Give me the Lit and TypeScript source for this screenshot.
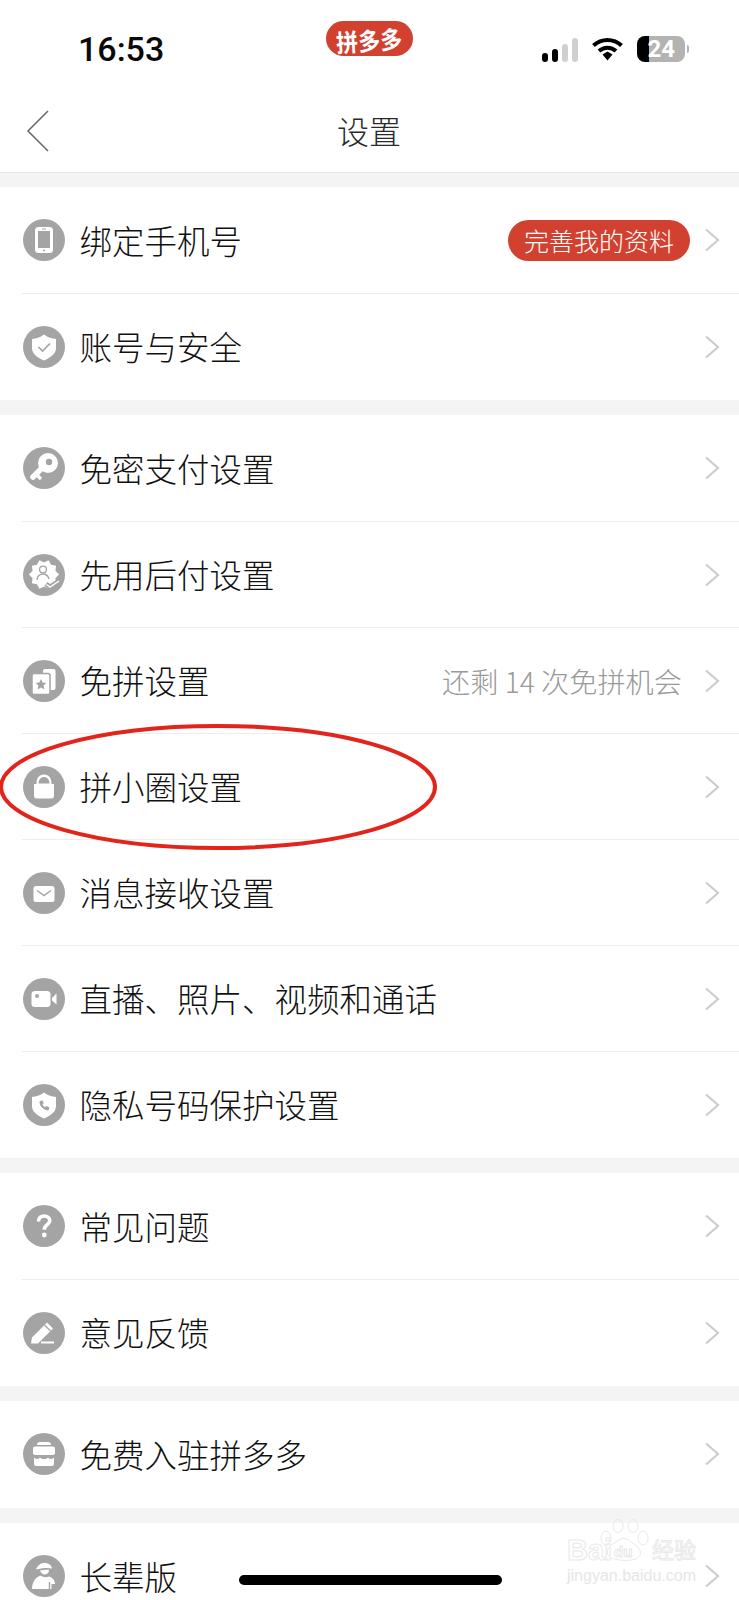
import { LitElement, html, css, svg } from "lit";
import { customElement } from "lit/decorators.js";

const GRAY = "#a4a4a4";

// ten pointed seal behind the "pay later" icon
function seal() {
  const pts: string[] = [];
  for (let i = 0; i < 20; i++) {
    const a = (i / 20) * Math.PI * 2;
    const r = i % 2 ? 12 : 15;
    pts.push(`${(21 + r * Math.cos(a)).toFixed(1)},${(20.5 + r * Math.sin(a)).toFixed(1)}`);
  }
  return pts.join(" ");
}

const SHIELD = "M21 8.5C25 11.5 29 12.5 33 13V22C33 28 27 32 21 34.5C15 32 9 28 9 22V13C13 12.5 17 11.5 21 8.5Z";

const ICONS: Record<string, unknown> = {
  phone: svg`<rect x="12" y="8" width="18" height="26" rx="3.5" fill="#fff"/><rect x="15" y="12" width="12" height="17" fill="${GRAY}"/><rect x="19" y="9.5" width="4" height="1" fill="${GRAY}"/><circle cx="21" cy="31.5" r="1" fill="${GRAY}"/>`,
  shield: svg`<path d="${SHIELD}" fill="#fff"/><polyline points="15.5,21 19.5,25 27,17.5" fill="none" stroke="${GRAY}" stroke-width="1.6"/>`,
  key: svg`<circle cx="25" cy="16" r="10" fill="#fff"/><circle cx="26" cy="15" r="3.2" fill="${GRAY}"/><path d="M20 20L10 30" stroke="#fff" stroke-width="5.5" stroke-linecap="round"/><path d="M13.5 27.5L18 32" stroke="#fff" stroke-width="3.2"/>`,
  seal: svg`<polygon points="${seal()}" fill="#fff"/><circle cx="20" cy="15.5" r="3.4" fill="none" stroke="${GRAY}" stroke-width="1.3"/><path d="M14 26C14.5 21.5 17 20 20 20C23 20 25 21.5 26 25" fill="none" stroke="${GRAY}" stroke-width="1.3"/><polyline points="23,30 27,33 36,27" fill="none" stroke="${GRAY}" stroke-width="5"/><polyline points="23.5,30.5 27,33 36,27" fill="none" stroke="#fff" stroke-width="1.5"/>`,
  cards: svg`<rect x="20" y="9" width="12.5" height="21" rx="2" fill="#fff"/><rect x="9" y="13.5" width="18" height="21" rx="2" fill="#fff" stroke="${GRAY}" stroke-width="1.5"/><polygon points="18,19 19.6,22.6 23.4,23 20.6,25.6 21.4,29.4 18,27.4 14.6,29.4 15.4,25.6 12.6,23 16.4,22.6" fill="${GRAY}"/>`,
  lock: svg`<path d="M13.5 18C13.5 12 16 8.5 21 8.5C26 8.5 28.5 12 28.5 18H31V30C31 31.5 30 32.5 28.5 32.5H13.5C12 32.5 11 31.5 11 30V18Z" fill="#fff"/><path d="M15.5 17.5C15.5 14 17.5 11 21 11C24.5 11 26.5 14 26.5 17.5Z" fill="${GRAY}"/>`,
  mail: svg`<rect x="10.5" y="14" width="21" height="16" rx="2.5" fill="#fff"/><polyline points="14,18.5 21,23.5 28,18.5" fill="none" stroke="${GRAY}" stroke-width="1.5"/>`,
  video: svg`<rect x="8.5" y="13" width="19" height="16" rx="3.5" fill="#fff"/><path d="M29 20L33.5 15.5V26.5L29 22.5Z" fill="#fff"/><circle cx="14" cy="18" r="2" fill="${GRAY}"/>`,
  guard: svg`<path d="${SHIELD}" fill="#fff"/><path d="M16.5 17.5C16.5 22 20 26 25.5 26.5L26.5 23.5L23.5 22L22 23C20.8 22.5 20 21.5 19.6 20.4L20.8 19L19.3 16.2Z" fill="${GRAY}"/>`,
  help: svg`<path d="M15.5 16.5C15.5 13 18 11 21.2 11C24.4 11 26.8 13 26.8 15.8C26.8 19.8 21.3 19.6 21.3 24.8" fill="none" stroke="#fff" stroke-width="3.6"/><circle cx="21.3" cy="30" r="2.4" fill="#fff"/>`,
  pen: svg`<polygon points="8,31.5 9,25.5 24,10.5 30,16.5 15,31.5" fill="#fff"/><path d="M21.5 13L27.5 19" stroke="${GRAY}" stroke-width="1.2"/><path d="M18 30.5H31" stroke="#fff" stroke-width="2"/>`,
  store: svg`<path d="M14 12C14 10 15 9 17 9H25C27 9 28 10 28 12Z" fill="#fff"/><rect x="10" y="13.5" width="22" height="8.5" rx="2" fill="#fff"/><path d="M11 24.5C13 26.5 15 26.5 17 24.5C19 26.5 23 26.5 25 24.5C27 26.5 29 26.5 31 24.5V31C31 32 30 33 29 33H13C12 33 11 32 11 31Z" fill="#fff"/>`,
  elder: svg`<path d="M13 14.5C15 9 19 7.5 23 8C26.5 8.5 28.5 10.5 29 13.5C24 12.5 18 13 13 14.5Z" fill="#fff"/><path d="M17 15.5C19 15 23 14.5 26 14.8C26 17.5 24.5 19.5 22 19.5C19.5 19.5 18 18 17 15.5Z" fill="#fff"/><path d="M9 34C9 28 12 22.5 17.5 20.5C20 22.5 24 22.5 26 21.5C29.5 22.5 32 25 32 29L28.5 29V34Z" fill="#fff"/><path d="M26.5 27V34" stroke="${GRAY}" stroke-width="1.4"/>`,
};

interface Row {
  icon: string;
  label: string;
  hint?: string;
  pill?: string;
}

const SECTIONS: Row[][] = [
  [
    { icon: "phone", label: "绑定手机号", pill: "完善我的资料" },
    { icon: "shield", label: "账号与安全" },
  ],
  [
    { icon: "key", label: "免密支付设置" },
    { icon: "seal", label: "先用后付设置" },
    { icon: "cards", label: "免拼设置", hint: "还剩 14 次免拼机会" },
    { icon: "lock", label: "拼小圈设置" },
    { icon: "mail", label: "消息接收设置" },
    { icon: "video", label: "直播、照片、视频和通话" },
    { icon: "guard", label: "隐私号码保护设置" },
  ],
  [
    { icon: "help", label: "常见问题" },
    { icon: "pen", label: "意见反馈" },
  ],
  [{ icon: "store", label: "免费入驻拼多多" }],
  [{ icon: "elder", label: "长辈版" }],
];

@customElement("app-root")
export class AppRoot extends LitElement {
  static styles = css`
    :host {
      display: block;
      position: relative;
      width: 739px;
      height: 1600px;
      overflow: hidden;
      background: #f4f4f4;
      font-family: "Noto Sans CJK SC", "Liberation Sans", sans-serif;
      color: #111;
    }

    .top {
      background: #fff;
      border-bottom: 1px solid #e4e4e4;
    }

    .status {
      height: 88px;
      display: grid;
      grid-template-columns: 1fr auto 1fr;
      align-items: start;
    }

    .time {
      margin: 30px 0 0 78px;
      font: 500 34px/38px Roboto, "Liberation Sans", sans-serif;
      color: #0a0a0a;
    }

    .app-tag {
      margin-top: 21px;
      width: 87px;
      height: 35px;
      border-radius: 18px;
      background: #d2412f;
      color: #fff;
      display: flex;
      align-items: center;
      justify-content: center;
      font-size: 22px;
      font-weight: 700;
      line-height: 1;
    }

    .app-tag span {
      transform: rotate(-4deg) scale(1, 1.12);
    }

    .sys {
      display: flex;
      justify-content: flex-end;
      align-items: center;
      margin-top: 36px;
      padding-right: 54px;
      gap: 14px;
    }

    .signal {
      display: flex;
      align-items: flex-end;
      gap: 3.5px;
      height: 25px;
    }

    .signal i {
      display: block;
      width: 6.5px;
      border-radius: 3px;
      background: #000;
    }

    .signal i.off {
      background: #cfcfcf;
    }

    .battery {
      position: relative;
      width: 48px;
      height: 26px;
      border-radius: 8px;
      background: linear-gradient(90deg, #000 0 12px, #b3b3b3 12px);
      color: #fff;
      font: 700 24px/26px Roboto, "Liberation Sans", sans-serif;
      text-align: right;
      padding-right: 10px;
      box-sizing: border-box;
    }

    .battery::after {
      content: "";
      position: absolute;
      left: 50px;
      top: 9px;
      width: 2px;
      height: 8px;
      border-radius: 0 2px 2px 0;
      background: #b3b3b3;
    }

    .nav {
      height: 84px;
      position: relative;
      display: flex;
      align-items: center;
      justify-content: center;
      font-size: 32px;
      font-weight: 300;
      color: #2a2a2a;
      padding-right: 1px;
    }

    .back {
      position: absolute;
      left: 26px;
      top: 22px;
    }

    .list {
      display: flex;
      flex-direction: column;
      gap: 15px;
      padding-top: 14px;
    }

    .section {
      background: #fff;
      padding-bottom: 1px;
    }

    .row {
      height: 106px;
      margin-left: 22px;
      box-sizing: border-box;
      display: flex;
      align-items: center;
      padding-right: 19px;
    }

    .row + .row {
      border-top: 1px solid #ededed;
    }

    .ico {
      width: 42px;
      height: 42px;
      flex: none;
      margin: 0 15px 0 0.5px;
    }

    .label {
      flex: 1;
      font-size: 32.5px;
      font-weight: 300;
      line-height: 1;
      white-space: nowrap;
    }

    .hint {
      font-size: 28.2px;
      font-weight: 300;
      color: #999;
      margin-right: 22px;
      white-space: nowrap;
    }

    .pill {
      width: 182px;
      height: 41px;
      border-radius: 21px;
      background: #d2412f;
      color: #fff;
      font-size: 25px;
      font-weight: 300;
      line-height: 41px;
      text-align: center;
      margin-right: 14px;
    }

    .arrow {
      flex: none;
      display: block;
    }

    .ring,
    .mark,
    .home {
      position: absolute;
      pointer-events: none;
    }

    .ring {
      left: 0;
      top: 722px;
    }

    .mark {
      left: 560px;
      top: 1516px;
    }

    .home {
      left: 239px;
      top: 1575px;
      width: 263px;
      height: 10px;
      border-radius: 5px;
      background: #000;
    }
  `;

  renderRow(r: Row) {
    return html`
      <div class="row">
        <svg class="ico" viewBox="0 0 42 42">
          <circle cx="21" cy="21" r="21" fill=${GRAY}></circle>
          ${ICONS[r.icon]}
        </svg>
        <div class="label">${r.label}</div>
        ${r.hint ? html`<div class="hint">${r.hint}</div>` : ""}
        ${r.pill ? html`<div class="pill">${r.pill}</div>` : ""}
        <svg class="arrow" width="16" height="24" viewBox="0 0 16 24">
          <polyline points="2,1.5 14,12 2,22.5" fill="none" stroke="#cdcdcd" stroke-width="2.2"></polyline>
        </svg>
      </div>
    `;
  }

  render() {
    return html`
      <div class="top">
        <div class="status">
          <div class="time">16:53</div>
          <div class="app-tag"><span>拼多多</span></div>
          <div class="sys">
            <div class="signal">
              <i style="height:9px"></i>
              <i style="height:13px"></i>
              <i class="off" style="height:18px"></i>
              <i class="off" style="height:24px"></i>
            </div>
            <svg width="31" height="24" viewBox="0 0 31 24">
              <path d="M1.5 8.5C9.5 1 21.5 1 29.5 8.5" fill="none" stroke="#000" stroke-width="4"></path>
              <path d="M7 14C12 9.5 19 9.5 24 14" fill="none" stroke="#000" stroke-width="4"></path>
              <polygon points="10.5,17.5 15.5,14.5 20.5,17.5 15.5,23.5" fill="#000"></polygon>
            </svg>
            <div class="battery">24</div>
          </div>
        </div>
        <div class="nav">
          <svg class="back" width="24" height="42" viewBox="0 0 24 42">
            <polyline points="22,1 2,21 22,41" fill="none" stroke="#666" stroke-width="1.5"></polyline>
          </svg>
          设置
        </div>
      </div>

      <div class="list">
        ${SECTIONS.map((s) => html`<div class="section">${s.map((r) => this.renderRow(r))}</div>`)}
      </div>

      <svg class="ring" width="440" height="130" viewBox="0 0 440 130">
        <ellipse cx="218" cy="65" rx="217" ry="61" fill="none" stroke="#e3241b" stroke-width="4"></ellipse>
      </svg>

      <svg class="mark" width="144" height="72" viewBox="0 0 144 72">
        <g fill="none" stroke="#e9e9e9" stroke-width="1">
          <ellipse cx="58" cy="10" rx="5" ry="6.5"></ellipse>
          <ellipse cx="73" cy="10" rx="5" ry="6.5"></ellipse>
          <ellipse cx="46" cy="22" rx="5" ry="7"></ellipse>
          <ellipse cx="83" cy="22" rx="5" ry="7"></ellipse>
          <path d="M51 42C44 38 48 29 55 27C60 21 68 21 72 27C80 30 84 39 76 43C68 45 60 45 51 42Z"></path>
          <text x="7" y="44" font-family="Liberation Sans" font-size="29" font-weight="700">Bai</text>
          <text x="54" y="41" font-family="Liberation Sans" font-size="15" font-weight="700">du</text>
          <text x="92" y="42" font-family="Noto Sans CJK SC" font-size="22">经验</text>
        </g>
        <text x="7" y="65" font-family="Liberation Sans" font-size="16" fill="#e6e6e6">jingyan.baidu.com</text>
      </svg>

      <div class="home"></div>
    `;
  }
}
